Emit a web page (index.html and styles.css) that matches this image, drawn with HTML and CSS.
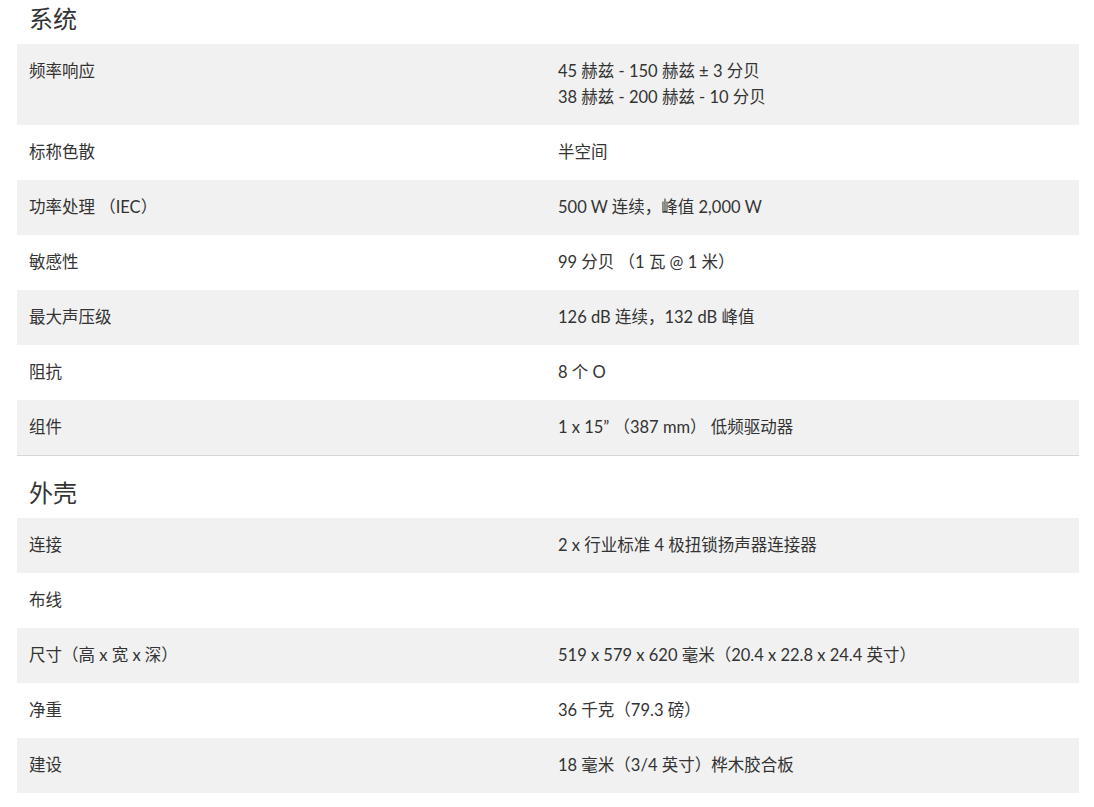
FILE: index.html
```
<!DOCTYPE html>
<html lang="zh-CN">
<head>
<meta charset="utf-8">
<link rel="stylesheet" href="styles.css">
</head>
<body>
<div class="page">
  <section class="section">
    <h2 class="section-title">系统</h2>
    <div class="table">
      <div class="row"><div class="label">频率响应</div><div class="value">45 赫兹 - 150 赫兹 ± 3 分贝<br>38 赫兹 - 200 赫兹 - 10 分贝</div></div>
      <div class="row"><div class="label">标称色散</div><div class="value">半空间</div></div>
      <div class="row"><div class="label">功率处理 （IEC）</div><div class="value">500 W 连续，峰值 2,000 W</div></div>
      <div class="row"><div class="label">敏感性</div><div class="value">99 分贝 （1 瓦 @ 1 米）</div></div>
      <div class="row"><div class="label">最大声压级</div><div class="value">126 dB 连续，132 dB 峰值</div></div>
      <div class="row"><div class="label">阻抗</div><div class="value">8 个 Ο</div></div>
      <div class="row"><div class="label">组件</div><div class="value">1 x 15” （387 mm） 低频驱动器</div></div>
    </div>
  </section>
  <section class="section">
    <h2 class="section-title">外壳</h2>
    <div class="table">
      <div class="row"><div class="label">连接</div><div class="value">2 x 行业标准 4 极扭锁扬声器连接器</div></div>
      <div class="row"><div class="label">布线</div><div class="value"></div></div>
      <div class="row"><div class="label">尺寸（高 x 宽 x 深）</div><div class="value">519 x 579 x 620 毫米（20.4 x 22.8 x 24.4 英寸）</div></div>
      <div class="row"><div class="label">净重</div><div class="value">36 千克（79.3 磅）</div></div>
      <div class="row"><div class="label">建设</div><div class="value">18 毫米（3/4 英寸）桦木胶合板</div></div>
    </div>
  </section>
</div>
</body>
</html>
```
FILE: styles.css
```
html, body {
  margin: 0;
  padding: 0;
  background: #ffffff;
}
body {
  font-family: "Lato", "Noto Sans CJK SC", sans-serif;
  color: #333333;
  font-size: 16.5px;
}
.page {
  padding: 3px 15px 0 17px;
}
.section + .section {
  border-top: 1px solid #d6d6d6;
}
.section + .section .section-title {
  margin-top: 21px;
}
.section-title {
  margin: 0 0 9px 0;
  padding-left: 12px;
  font-size: 24px;
  font-weight: 400;
  line-height: 32px;
  color: #333333;
}
.table {
  display: flex;
  flex-direction: column;
}
.row {
  display: grid;
  grid-template-columns: 1fr 1fr;
  background: #ffffff;
}
.row:nth-child(odd) {
  background: #f1f1f1;
}
.label, .value {
  padding: 14px 12px 15px 12px;
  line-height: 26px;
  min-height: 26px;
}
.value {
  padding-left: 10px;
}
```
